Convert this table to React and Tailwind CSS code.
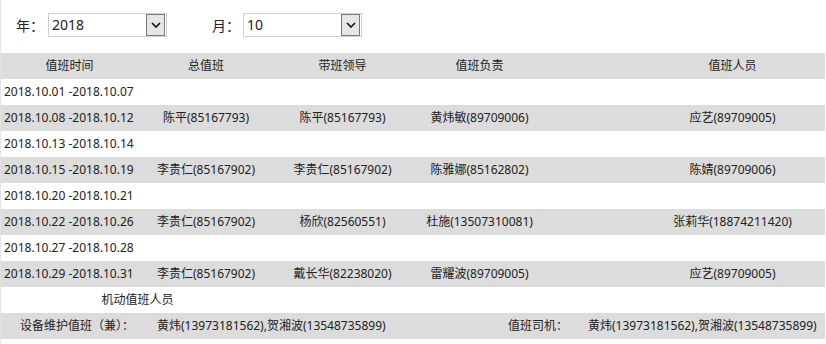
import React from 'react';

const rows = [
  { date: '2018.10.01 -2018.10.07' },
  { date: '2018.10.08 -2018.10.12', chief: '陈平(85167793)', lead: '陈平(85167793)', duty: '黄炜敏(89709006)', staff: '应艺(89709005)' },
  { date: '2018.10.13 -2018.10.14' },
  { date: '2018.10.15 -2018.10.19', chief: '李贵仁(85167902)', lead: '李贵仁(85167902)', duty: '陈雅娜(85162802)', staff: '陈婧(89709006)' },
  { date: '2018.10.20 -2018.10.21' },
  { date: '2018.10.22 -2018.10.26', chief: '李贵仁(85167902)', lead: '杨欣(82560551)', duty: '杜施(13507310081)', staff: '张莉华(18874211420)' },
  { date: '2018.10.27 -2018.10.28' },
  { date: '2018.10.29 -2018.10.31', chief: '李贵仁(85167902)', lead: '戴长华(82238020)', duty: '雷耀波(89709005)', staff: '应艺(89709005)' },
];

const grid = 'grid grid-cols-[137px_136px_137px_137px_369px] w-[916px] h-[26px] items-center';

function FakeSelect({ value }) {
  return (
    <div className="flex items-center w-[119px] h-[24px] border border-[#d0d0d0] bg-white pl-[3px] pr-px">
      <span className="flex-1 text-[14px] leading-none">{value}</span>
      <span className="flex items-center justify-center w-[19px] h-[22px] border border-[#7a7a7a] bg-[#e6e6e6]">
        <svg width="10" height="6" viewBox="0 0 10 6">
          <path d="M1 1 L5 5 L9 1" fill="none" stroke="#111" strokeWidth="1.6" />
        </svg>
      </span>
    </div>
  );
}

export default function App() {
  return (
    <div
      className="w-[826px] h-[344px] bg-white text-[#222] border-l border-[#e3e3e3] overflow-hidden"
      style={{ fontFamily: '"Noto Sans", "Noto Sans CJK SC", sans-serif' }}
    >
      {/* Filters */}
      <div className="flex items-center h-[53px] pb-[3px] pl-[15px] text-[14px]">
        <span className="w-[32px]">年：</span>
        <FakeSelect value="2018" />
        <span className="ml-[45px] w-[31px]">月：</span>
        <FakeSelect value="10" />
      </div>

      {/* Table */}
      <div className="w-[824px] overflow-hidden text-[12px]">
        <div className={`${grid} bg-[#dcdcdc] text-center`}>
          <span>值班时间</span>
          <span>总值班</span>
          <span>带班领导</span>
          <span>值班负责</span>
          <span>值班人员</span>
        </div>
        {rows.map((r, i) => (
          <div key={r.date} className={`${grid} text-center ${i % 2 ? 'bg-[#dcdcdc]' : 'bg-white'}`}>
            <span className="text-left pl-[3px]">{r.date}</span>
            <span>{r.chief}</span>
            <span>{r.lead}</span>
            <span>{r.duty}</span>
            <span>{r.staff}</span>
          </div>
        ))}
        <div className="flex items-center h-[26px] bg-white">
          <span className="w-[273px] text-center">机动值班人员</span>
        </div>
        <div className="grid grid-cols-[156px_351px_80px_1fr] h-[26px] items-center bg-[#dcdcdc]">
          <span className="pl-[19px]">设备维护值班（兼）：</span>
          <span>黄炜(13973181562),贺湘波(13548735899)</span>
          <span>值班司机：</span>
          <span>黄炜(13973181562),贺湘波(13548735899)</span>
        </div>
      </div>
    </div>
  );
}
